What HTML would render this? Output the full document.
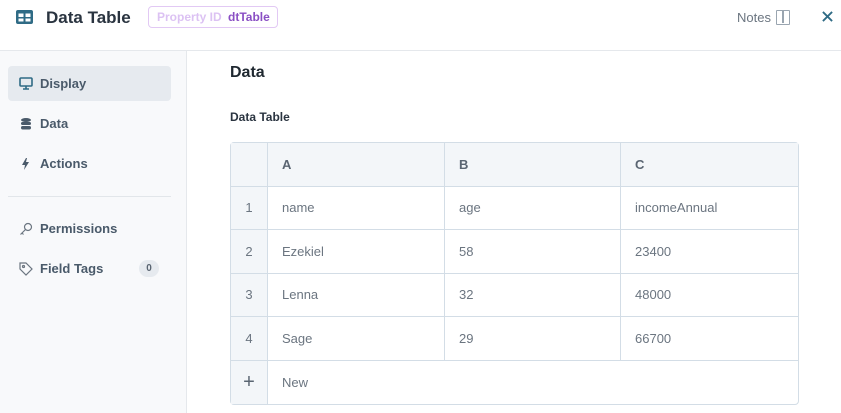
<!DOCTYPE html>
<html><head><style>
*{box-sizing:border-box;margin:0;padding:0}
body{width:841px;height:413px;overflow:hidden;background:#fff;font-family:"Liberation Sans",sans-serif;position:relative}
.abs{position:absolute}
.side{left:0;top:51px;width:187px;height:362px;background:#f8f9fb;border-right:1px solid #e5e8ec}
.nav{position:absolute;left:19px;font-size:13px;font-weight:bold;color:#4a5a6a;display:flex;align-items:center}
.nav svg{margin-right:7px}
table{position:absolute;left:230px;top:142px;width:569px;border-collapse:separate;border-spacing:0;border:1px solid #d3dde6;border-radius:4px;font-size:13px;color:#6b7580}
td{height:43.5px;border-right:1px solid #d3dde6;border-bottom:1px solid #d3dde6;padding-left:14px}
td:last-child{border-right:none}
tr:last-child td{border-bottom:none}
td.n{width:37px;padding:0;text-align:center;background:#f3f6f9}
tr.h td{background:#f3f6f9;font-weight:bold;color:#5a6572}
</style></head><body>
<div class="abs" style="left:0;top:50px;width:841px;height:1px;background:#e5e8ec"></div>
<svg class="abs" style="left:16px;top:10px" width="17" height="14" viewBox="0 0 17 14"><rect width="17" height="14" rx="2" fill="#2f6b85"/><rect x="2.5" y="3.5" width="5" height="3.5" fill="#fff"/><rect x="9.5" y="3.5" width="5" height="3.5" fill="#fff"/><rect x="2.5" y="8.5" width="5" height="3" fill="#fff"/><rect x="9.5" y="8.5" width="5" height="3" fill="#fff"/></svg>
<div class="abs" style="left:46px;top:8px;font-size:17px;font-weight:bold;color:#2a3440">Data Table</div>
<div class="abs" style="left:148px;top:6px;width:130px;height:22px;border:1px solid #e2c9f4;border-radius:4px;font-size:12px;font-weight:bold;line-height:20px;padding-left:8px"><span style="color:#dcc2f3">Property ID</span> <span style="color:#8a4fc4;margin-left:3px">dtTable</span></div>
<div class="abs" style="left:737px;top:10px;font-size:13px;color:#6b7580">Notes</div>
<div class="abs" style="left:776px;top:10px;width:14px;height:15px;border:1.5px solid #9aa5b0;border-radius:1px"><div style="position:absolute;left:5px;top:0;width:1.5px;height:12px;background:#9aa5b0"></div></div>
<svg class="abs" style="left:822px;top:11px" width="11" height="11" viewBox="0 0 12 12"><path d="M1 1L11 11M11 1L1 11" stroke="#2f6b85" stroke-width="2"/></svg>
<div class="abs side"></div>
<div class="abs" style="left:8px;top:66px;width:163px;height:35px;background:#e6eaef;border-radius:4px"></div>
<div class="nav" style="top:76px"><svg width="14" height="13" viewBox="0 0 14 13"><rect x="1" y="1" width="12" height="8" rx="1" fill="none" stroke="#2f6b85" stroke-width="1.6"/><path d="M7 9v3M4 12h6" stroke="#2f6b85" stroke-width="1.6"/></svg>Display</div>
<div class="nav" style="top:116px"><svg width="14" height="14" viewBox="0 0 14 14"><ellipse cx="7" cy="3" rx="5" ry="2" fill="#4a5a6a"/><rect x="2" y="5" width="10" height="3" rx="1.5" fill="#4a5a6a"/><rect x="2" y="9" width="10" height="3.5" rx="1.7" fill="#4a5a6a"/></svg>Data</div>
<div class="nav" style="top:156px"><svg width="14" height="14" viewBox="0 0 14 14"><path d="M7 1L3 8h3l-1 5 5-8H7l1-4z" fill="#4a5a6a"/></svg>Actions</div>
<div class="abs" style="left:8px;top:196px;width:163px;height:1px;background:#e2e6ea"></div>
<div class="nav" style="top:221px"><svg width="14" height="14" viewBox="0 0 14 14" fill="none" stroke="#6b7580" stroke-width="1.2"><circle cx="9" cy="5" r="3.5"/><path d="M6.5 7.5L1.5 12.5M3 11l1.5 1.5"/></svg>Permissions</div>
<div class="nav" style="top:261px"><svg width="14" height="14" viewBox="0 0 14 14" fill="none" stroke="#6b7580" stroke-width="1.2"><path d="M1 1h6l6 6-6 6-6-6z"/><circle cx="4.5" cy="4.5" r="1"/></svg>Field Tags</div>
<div class="abs" style="left:139px;top:260px;width:20px;height:17px;border-radius:9px;background:#e6eaef;font-size:10px;font-weight:bold;color:#5a6572;text-align:center;line-height:17px">0</div>
<div class="abs" style="left:230px;top:64px;font-size:16px;font-weight:bold;color:#1f2830">Data</div>
<div class="abs" style="left:230px;top:110px;font-size:12px;font-weight:bold;color:#2a3440">Data Table</div>
<table>
<tr class="h"><td class="n"></td><td style="width:177px">A</td><td style="width:176px">B</td><td>C</td></tr>
<tr><td class="n">1</td><td>name</td><td>age</td><td>incomeAnnual</td></tr>
<tr><td class="n">2</td><td>Ezekiel</td><td>58</td><td>23400</td></tr>
<tr><td class="n">3</td><td>Lenna</td><td>32</td><td>48000</td></tr>
<tr><td class="n">4</td><td>Sage</td><td>29</td><td>66700</td></tr>
<tr><td class="n" style="font-size:20px;color:#5a6572">+</td><td colspan="3">New</td></tr>
</table>
</body></html>
